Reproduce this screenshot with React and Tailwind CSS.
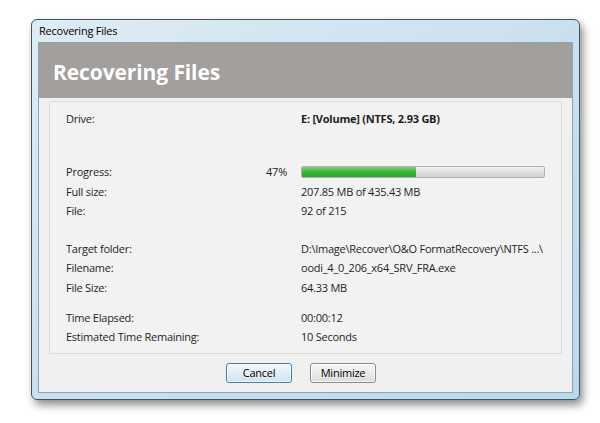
import React from "react";

const font = { fontFamily: '"Open Sans", "Noto Sans", sans-serif' };

function Row({ label, children, extra }) {
  return (
    <div className="flex h-[19.5px] items-center">
      <div className="w-[235px] shrink-0 flex items-center pr-[14px]">
        <span>{label}</span>
        {extra ? <span className="ml-auto">{extra}</span> : null}
      </div>
      <div className="flex-1 flex items-center">{children}</div>
    </div>
  );
}

export default function App() {
  return (
    <div
      className="w-[600px] h-[423px] bg-white pt-[19px] pl-[31px] overflow-hidden text-[11px] tracking-[-0.24px] text-[#1e1e1e]"
      style={font}
    >
      <div className="w-[549px] h-[381px] rounded-[6px] border border-[#3f5563] bg-gradient-to-br from-[#dfecf5] via-[#cbe0ee] to-[#b8daee] shadow-[3px_5px_9px_rgba(0,0,0,0.45)] flex flex-col px-[6px] pb-[6px]">
        <div className="h-[22px] flex items-center pl-[1px] text-[11px] text-black">
          Recovering Files
        </div>
        <div className="flex-1 flex flex-col bg-[#f0f0f0] border border-[#8fa3b0]">
          <div className="h-[55px] bg-[#a29f9d] flex items-center pl-[14px] pt-[3px]">
            <span className="text-white font-bold text-[21px] leading-none tracking-[-0.1px]">
              Recovering Files
            </span>
          </div>
          <div className="mx-[10px] mt-[3px] h-[253px] border border-[#dcdcdc] rounded-[2px] bg-[#f2f2f2] pl-[16px] pt-[7px]">
            <Row label="Drive:">
              <span className="font-bold">E: [Volume] (NTFS, 2.93 GB)</span>
            </Row>
            <div className="h-[34px]" />
            <Row label="Progress:" extra="47%">
              <div className="w-[244px] h-[12px] rounded-[2px] border border-[#b2b2b2] bg-gradient-to-b from-[#f3f3f3] via-[#dedede] to-[#d0d0d0] overflow-hidden">
                <div className="w-[47%] h-full bg-gradient-to-b from-[#7fd07f] via-[#3cb43c] to-[#2aa52a]" />
              </div>
            </Row>
            <Row label="Full size:">207.85 MB of 435.43 MB</Row>
            <Row label="File:">92 of 215</Row>
            <div className="h-[18px]" />
            <Row label="Target folder:">D:\Image\Recover\O&amp;O FormatRecovery\NTFS ...\</Row>
            <Row label="Filename:">oodi_4_0_206_x64_SRV_FRA.exe</Row>
            <Row label="File Size:">64.33 MB</Row>
            <div className="h-[10.5px]" />
            <Row label="Time Elapsed:">00:00:12</Row>
            <Row label="Estimated Time Remaining:">10 Seconds</Row>
          </div>
          <div className="flex-1 flex items-center justify-center gap-[18px] pr-[9px]">
            <button className="w-[66px] h-[20px] rounded-[3px] border border-[#3c7fb1] bg-gradient-to-b from-[#f2f8fc] via-[#e3eef6] to-[#cfe2ef] text-[11px] text-black shadow-[inset_0_0_0_1px_rgba(255,255,255,0.8)]">
              Cancel
            </button>
            <button className="w-[66px] h-[20px] rounded-[3px] border border-[#8a8a8a] bg-gradient-to-b from-[#f6f6f6] via-[#ebebeb] to-[#dcdcdc] text-[11px] text-black shadow-[inset_0_0_0_1px_rgba(255,255,255,0.8)]">
              Minimize
            </button>
          </div>
        </div>
      </div>
    </div>
  );
}
